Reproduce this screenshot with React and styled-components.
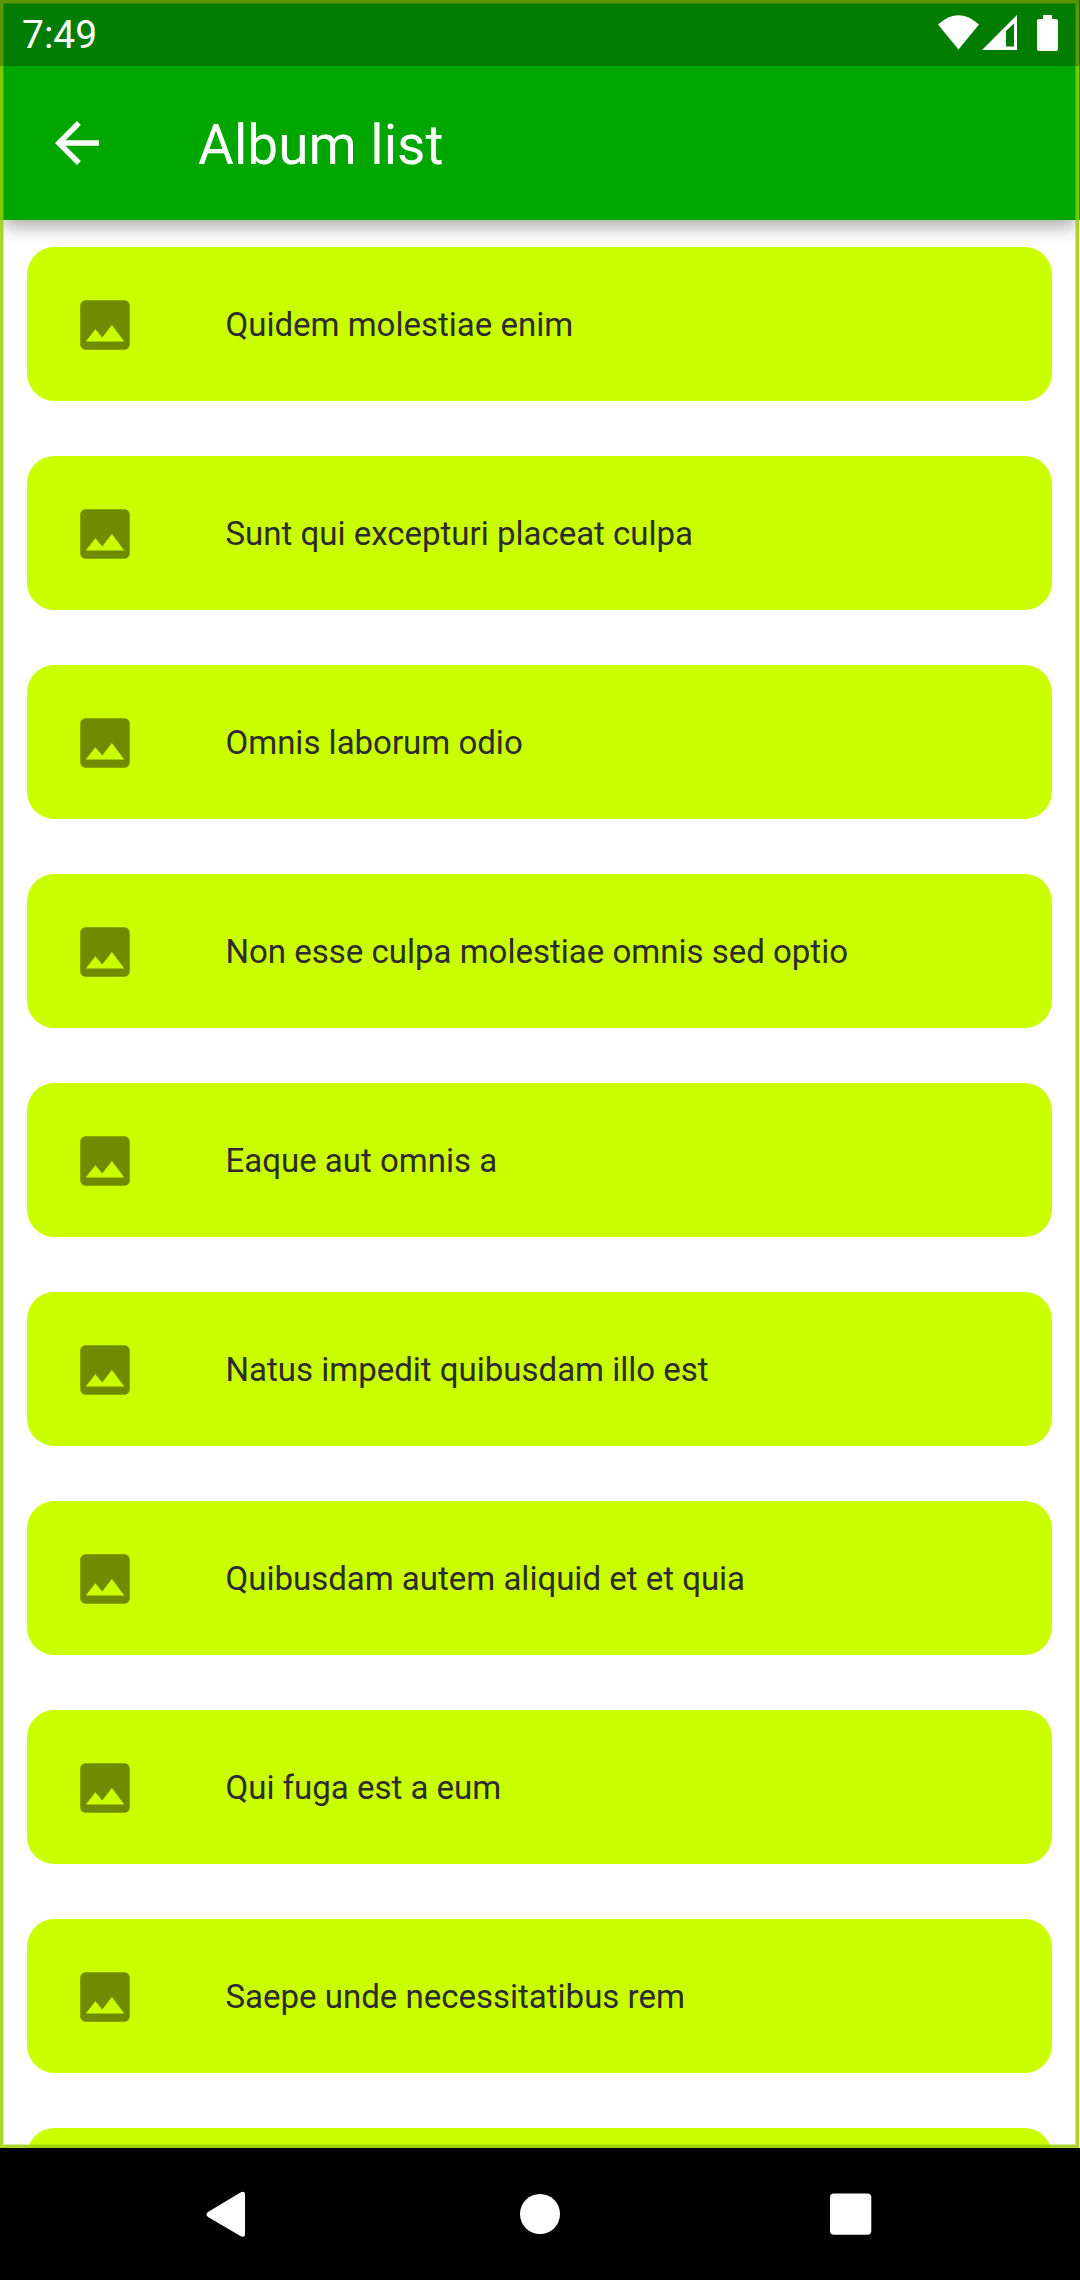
import React from "react";
import styled, { createGlobalStyle } from "styled-components";

const GlobalStyle = createGlobalStyle`
  * { box-sizing: border-box; }
  body { margin: 0; background: #fff; font-family: Roboto, "Liberation Sans", sans-serif; }
`;

const Phone = styled.div`
  display: flex;
  flex-direction: column;
  width: 1080px;
  height: 2280px;
  overflow: hidden;
`;

const Screen = styled.div`
  position: relative;
  display: flex;
  flex-direction: column;
  height: 2148px;
  overflow: hidden;
  background: linear-gradient(#00a600 66px, #fff 66px);
`;

const FocusFrame = styled.div`
  position: absolute;
  inset: 0 1px 0 0;
  border: 3px solid rgba(150, 206, 0, 0.83);
  box-shadow: inset 0 0 0 1px rgba(150, 206, 0, 0.4);
  pointer-events: none;
  z-index: 2;
`;

const StatusBar = styled.div`
  display: flex;
  flex: none;
  justify-content: space-between;
  height: 66px;
  padding: 0 20px 0 22px;
  background: rgba(0, 0, 0, 0.25);
  z-index: 3;
`;

const Clock = styled.span`
  color: #fff;
  font-size: 39px;
  line-height: 70px;
`;

const AppBar = styled.header`
  display: flex;
  flex: none;
  align-items: center;
  height: 154px;
  padding-left: 44px;
  background: #00a600;
  box-shadow: 0 12px 16px -4px rgba(0, 0, 0, 0.3);
  z-index: 1;
`;

const BackButton = styled.button`
  display: flex;
  width: 66px;
  height: 66px;
  margin-right: 88px;
  padding: 0;
  border: 0;
  background: none;
`;

const Title = styled.h1`
  margin: 3px 0 0;
  color: #fff;
  font-size: 55px;
  font-weight: 400;
  line-height: 64px;
`;

const List = styled.main`
  display: flex;
  flex: 1;
  flex-direction: column;
  gap: 55px;
  min-height: 0;
  padding: 27px 28px 0 27px;
  overflow: hidden;
`;

const Card = styled.article`
  display: flex;
  flex: none;
  align-items: center;
  gap: 88px;
  height: 154px;
  padding: 1px 44px 0 44.5px;
  border-radius: 27.5px;
  background: #caff00;
`;

const CardLabel = styled.span`
  color: #2c2c2c;
  font-size: 33px;
  line-height: 44px;
`;

const NavBar = styled.nav`
  display: flex;
  flex: none;
  align-items: center;
  gap: 270px;
  height: 132px;
  padding-left: 203px;
  background: #000;
`;

const albums = [
  "Quidem molestiae enim",
  "Sunt qui excepturi placeat culpa",
  "Omnis laborum odio",
  "Non esse culpa molestiae omnis sed optio",
  "Eaque aut omnis a",
  "Natus impedit quibusdam illo est",
  "Quibusdam autem aliquid et et quia",
  "Qui fuga est a eum",
  "Saepe unde necessitatibus rem",
  "",
];

const StatusIcons = () => (
  <svg width="126" height="66" viewBox="934 0 126 66" fill="#fff">
    <path d="M938 24.5Q958.500 6 979 24.500L958.500 49.500Z" />
    <path fillRule="evenodd" d="M982 50L1017 15V50ZM1006 31V46.500H1014V23.500Z" />
    <path d="M1043 15h9v4h4q2 0 2 2v28q0 2-2 2h-17q-2 0-2-2v-28q0-2 2-2h4z" />
  </svg>
);

const BackArrow = () => (
  <svg width="66" height="66" viewBox="0 0 24 24" fill="#fff">
    <path d="M20 11H7.830l5.590-5.590L12 4l-8 8 8 8 1.410-1.410L7.830 13H20v-2z" />
  </svg>
);

const ImageIcon = () => (
  <svg width="66" height="66" viewBox="0 0 24 24" fill="rgba(0,0,0,0.45)">
    <path d="M21 19V5c0-1.100-.9-2-2-2H5c-1.100 0-2 .9-2 2v14c0 1.100.9 2 2 2h14c1.100 0 2-.9 2-2zM8.500 13.500l2.500 3.010L14.500 12l4.500 6H5l3.500-4.500z" />
  </svg>
);

export default function App() {
  return (
    <>
      <GlobalStyle />
      <Phone>
        <Screen>
          <StatusBar>
            <Clock>7:49</Clock>
            <StatusIcons />
          </StatusBar>
          <AppBar>
            <BackButton aria-label="Back"><BackArrow /></BackButton>
            <Title>Album list</Title>
          </AppBar>
          <List>
            {albums.map((name, i) => (
              <Card key={i}>
                <ImageIcon />
                <CardLabel>{name}</CardLabel>
              </Card>
            ))}
          </List>
          <FocusFrame />
        </Screen>
        <NavBar>
          <svg width="47" height="48" viewBox="0 0 47 48" fill="#fff">
            <path d="M5 22L37 2.800Q42 0 42 5V43.500Q42 48.500 37 45.700L5 27Q2 24.500 5 22Z" />
          </svg>
          <svg width="40" height="40" viewBox="0 0 40 40" fill="#fff">
            <circle cx="20" cy="20" r="20" />
          </svg>
          <svg width="42" height="42" viewBox="0 0 42 42" fill="#fff">
            <rect x="0" y="0.500" width="41.300" height="41.300" rx="4" />
          </svg>
        </NavBar>
      </Phone>
    </>
  );
}
